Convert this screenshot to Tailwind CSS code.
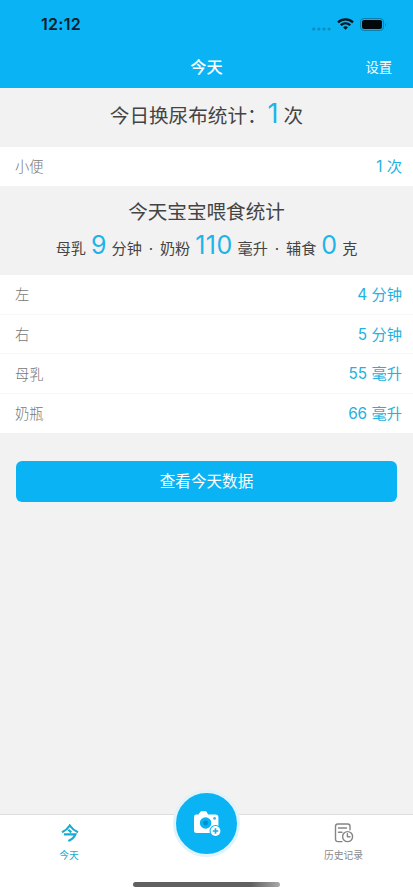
<!DOCTYPE html>
<html lang="zh-CN">
<head>
<meta charset="utf-8">
<meta name="viewport" content="width=device-width, initial-scale=1">
<title>今天</title>
<script src="https://cdn.jsdelivr.net/npm/@tailwindcss/browser@4"></script>
</head>
<body class="flex h-[895px] w-[413px] flex-col overflow-hidden bg-[#f2f2f2] font-['Inter','Noto_Sans_CJK_SC',sans-serif] text-[#444]">
<header class="h-[88px] shrink-0 bg-[#0ab4f4]">
  <div class="flex h-[46px] items-center justify-between pl-[41px] pr-[26px] pt-[2px]">
    <span class="text-[16px] font-semibold leading-none tracking-[0.3px] text-[#08202c]">12:12</span>
    <div class="flex items-center">
      <svg class="mt-[9px] mr-[6px]" width="19" height="4" viewBox="0 0 19 4" fill="#078dbf"><circle cx="1.8" cy="2" r="1.6"/><circle cx="6.9" cy="2" r="1.6"/><circle cx="12" cy="2" r="1.6"/><circle cx="17.1" cy="2" r="1.6"/></svg>
      <svg class="mr-[6px]" width="17" height="12" viewBox="0 0 17 12" fill="none" stroke="#04141c" stroke-width="2.3"><path d="M1 4.3C5.2 0.3 11.8 0.3 16 4.3"/><path d="M3.8 7.2C6.5 4.7 10.5 4.7 13.2 7.2"/><path d="M6 9.3Q8.5 7.2 11 9.3L8.5 11.8Z" fill="#04141c" stroke="none"/></svg>
      <svg width="27" height="13" viewBox="0 0 27 13"><rect x=".5" y=".5" width="23" height="12" rx="3.4" fill="none" stroke="#087fae"/><rect x="2" y="2" width="20" height="9" rx="2" fill="#03080c"/><path d="M25 4.5Q26.6 6.5 25 8.5Z" fill="#087fae"/></svg>
    </div>
  </div>
  <div class="grid h-[42px] grid-cols-3 items-center pr-[21px] pl-[21px] pt-[1px] text-white">
    <span></span>
    <h1 class="text-center text-[16.3px] font-medium leading-none">今天</h1>
    <a class="text-right text-[13.3px] leading-none">设置</a>
  </div>
</header>

<main class="flex-1">
  <section class="flex h-[59px] items-baseline justify-center pt-[8px]">
    <span class="text-[19.6px] leading-[36px]">今日换尿布统计：</span><span class="ml-[1px] text-[27px] leading-[36px] text-[#1eb4ea]">1</span><span class="ml-[5px] text-[19.6px] leading-[36px]">次</span>
  </section>
  <div class="flex h-[39px] items-center justify-between bg-white pl-[15px] pr-[11px] pt-[1px]">
    <span class="text-[14.3px] font-light text-[#777]">小便</span><span class="pt-[1px] text-[15.3px] text-[#23b2e0]">1 次</span>
  </div>
  <section class="h-[89px] pt-[11px] text-center">
    <h2 class="text-[19.6px] leading-[30px]">今天宝宝喂食统计</h2>
    <p class="flex items-baseline justify-center text-[15.2px] leading-[36px]"><span>母乳</span><b class="mx-[5px] text-[25px] font-normal text-[#1eb4ea]">9</b><span>分钟</span><span class="w-[18px]">·</span><span>奶粉</span><b class="mx-[5px] text-[25px] font-normal tracking-[0.4px] text-[#1eb4ea]">110</b><span>毫升</span><span class="w-[18px]">·</span><span>辅食</span><b class="mx-[5px] text-[25px] font-normal text-[#1eb4ea]">0</b><span>克</span></p>
  </section>
  <ul class="h-[158px] divide-y divide-[#f7f7f7] bg-white text-[#23b2e0]">
    <li class="flex h-[39.5px] items-center justify-between pl-[15px] pr-[11px] pt-[1px]"><span class="text-[14.3px] font-light text-[#777]">左</span><span class="pt-[1px] text-[15.3px]">4 分钟</span></li>
    <li class="flex h-[39.5px] items-center justify-between pl-[15px] pr-[11px] pt-[2px]"><span class="text-[14.3px] font-light text-[#777]">右</span><span class="pt-[1px] text-[15.3px]">5 分钟</span></li>
    <li class="flex h-[39.5px] items-center justify-between pl-[15px] pr-[11px] pt-[2px]"><span class="text-[14.3px] font-light text-[#777]">母乳</span><span class="pt-[1px] text-[15.3px]">55 毫升</span></li>
    <li class="flex h-[39.5px] items-center justify-between pl-[15px] pr-[11px] pt-[1px]"><span class="text-[14.3px] font-light text-[#777]">奶瓶</span><span class="pt-[1px] text-[15.3px]">66 毫升</span></li>
  </ul>
  <div class="px-[16px] pt-[28px]">
    <button class="h-[41px] w-full rounded-[6px] bg-[#0ab4f4] pt-[1px] text-[15.6px] text-white">查看今天数据</button>
  </div>
</main>

<nav class="relative flex h-[81px] shrink-0 flex-col border-t border-[#dedede] bg-white">
  <div class="flex justify-between">
    <a class="flex w-[138px] flex-col items-center pt-[9px] text-[#1aabcf]">
      <svg class="ml-[2px]" width="18" height="18" viewBox="0 0 18 18" fill="none" stroke="#1aabcf" stroke-width="2.2"><path d="M1 8.2Q6 6 8.8 1.5Q11.8 6 17 8.2"/><path d="M7.4 5.8L10.2 8.4"/><path d="M3 10.4H14.4Q12.6 14.8 7.4 17"/></svg>
      <span class="mt-[7px] text-[9.8px] leading-[14px]">今天</span>
    </a>
    <a class="flex w-[138px] flex-col items-center pt-[8px] text-[#8a8a8a]">
      <svg class="mr-[1px]" width="20" height="20" viewBox="0 0 20 20" fill="none" stroke="#858585" stroke-width="1.4" stroke-linecap="round" stroke-linejoin="round"><path d="M8 18.6H4Q1.5 18.6 1.5 16.1V3.2Q1.5 1 3.7 1H13.8Q16 1 16 3.2V6.8M4.5 5H12.5M4.5 9.2H8"/><circle cx="13.6" cy="13.6" r="5"/><path d="M13.4 10.8V13.8H16"/></svg>
      <span class="mt-[6px] mr-[1px] text-[9.8px] leading-[14px]">历史记录</span>
    </a>
  </div>
  <button class="absolute top-[-25px] left-[173px] flex h-[67px] w-[67px] items-center justify-center rounded-full border-[3px] border-[#dff3fb] bg-[#0ab4f4]" aria-label="拍照">
    <svg width="28" height="27" viewBox="0 0 28 27"><path d="M3 4.5H5.5L7.2 2Q7.6 1.2 8.5 1.2H12.5Q13.4 1.2 13.8 2L15 4.5H23Q25.4 4.5 25.4 7V20.5Q25.4 23 23 23H3.5Q1 23 1 20.5V7Q1 4.5 3 4.5Z" fill="#fff"/><circle cx="12.6" cy="13" r="5.8" fill="#0ab4f4"/><circle cx="12.6" cy="13" r="2.4" fill="#078dcc"/><circle cx="21.6" cy="8.4" r="1.4" fill="#4dafd8"/><circle cx="22.5" cy="21" r="6" fill="#0ab4f4"/><circle cx="22.5" cy="21" r="4.9" fill="#fff"/><path d="M22.5 18.2V23.8M19.7 21H25.3" stroke="#30a9d8" stroke-width="1.7"/></svg>
  </button>
  <div class="absolute top-[67px] left-[133px] h-[5px] w-[147px] rounded-full bg-linear-to-r from-[#606060] from-80% to-[#aaa]"></div>
</nav>
</body>
</html>
